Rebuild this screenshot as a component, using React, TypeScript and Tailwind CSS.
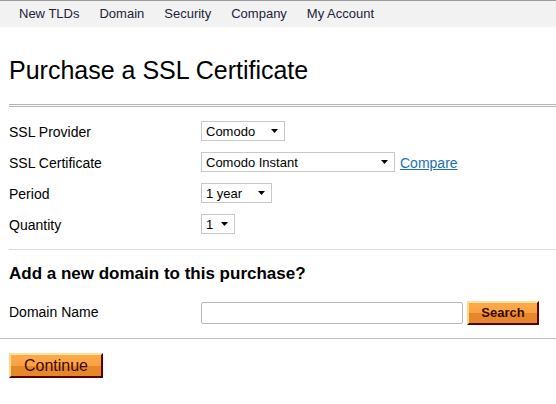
import React from 'react';

const navItems = ['New TLDs', 'Domain', 'Security', 'Company', 'My Account'];

// small select box with a black triangle on the right
const FakeSelect = ({ value, width }: { value: string; width: string }) => (
  <div className={`flex h-[20px] ${width} items-center justify-between border border-[#c8c8c8] bg-white pl-[4px] pr-[6px]`}>
    <span className="mt-[2px] text-[13px] leading-[18px] text-black">{value}</span>
    <svg width="7" height="4" viewBox="0 0 7 4">
      <path d="M0 0h7L3.5 4z" fill="#000" />
    </svg>
  </div>
);

const OrangeButton = ({ children, className }: { children: React.ReactNode; className: string }) => (
  <button
    className={`border-[2px] border-t-[#ffe39c] border-l-[#ffd98a] border-r-[#5a0000] border-b-[#5a0000] bg-[linear-gradient(#fbaa4c_0%,#f9a241_50%,#e4882a_50%,#e4882a_100%)] text-[#3a0800] ${className}`}
  >
    {children}
  </button>
);

const Row = ({ label, children }: { label: string; children: React.ReactNode }) => (
  <div className="flex h-[31px] items-center">
    <div className="mt-[4px] w-[192px] text-[14px]">{label}</div>
    {children}
  </div>
);

export default function App() {
  return (
    <div className="h-[404px] w-[556px] overflow-hidden bg-white text-black [font-family:'Liberation_Sans',Arial,sans-serif]">
      {/* top nav */}
      <div className="flex h-[27px] items-center border-t border-[#9a9a9a] bg-[#f2f2f2] pl-[9px] text-[13px] text-[#22223a]">
        {navItems.map((item) => (
          <a key={item} className="px-[10px]">
            {item}
          </a>
        ))}
      </div>

      <div className="pl-[9px]">
        <h1 className="mt-[29px] text-[25px] leading-[29px]">Purchase a SSL Certificate</h1>
        <div className="mt-[19px] h-[3px] border-y border-[#b4b4b4]" />

        <div className="mt-[8px]">
          <Row label="SSL Provider">
            <FakeSelect value="Comodo" width="w-[84px]" />
          </Row>
          <Row label="SSL Certificate">
            <FakeSelect value="Comodo Instant" width="w-[194px]" />
            <a href="#" className="ml-[5px] mt-[4px] text-[14px] text-[#1a6fb8] underline">
              Compare
            </a>
          </Row>
          <Row label="Period">
            <FakeSelect value="1 year" width="w-[71px]" />
          </Row>
          <Row label="Quantity">
            <FakeSelect value="1" width="w-[34px]" />
          </Row>
        </div>

        <div className="mt-[10px] h-px bg-[#dedede]" />

        <h2 className="mt-[14px] text-[17px] font-bold leading-[20px]">Add a new domain to this purchase?</h2>

        <div className="mt-[17px] flex h-[23px] items-center">
          <div className="w-[192px] text-[14px]">Domain Name</div>
          <input className="h-[22px] w-[262px] rounded-[2px] border border-[#b8b8b8] bg-white outline-none" />
          <OrangeButton className="ml-[4px] h-[24px] w-[72px] text-[13px] font-bold leading-none">Search</OrangeButton>
        </div>
      </div>

      <div className="mt-[14px] h-px bg-[#bcbcbc]" />

      <div className="pl-[9px]">
        <OrangeButton className="mt-[14px] h-[25px] w-[94px] text-[16px] leading-none">Continue</OrangeButton>
      </div>
    </div>
  );
}
